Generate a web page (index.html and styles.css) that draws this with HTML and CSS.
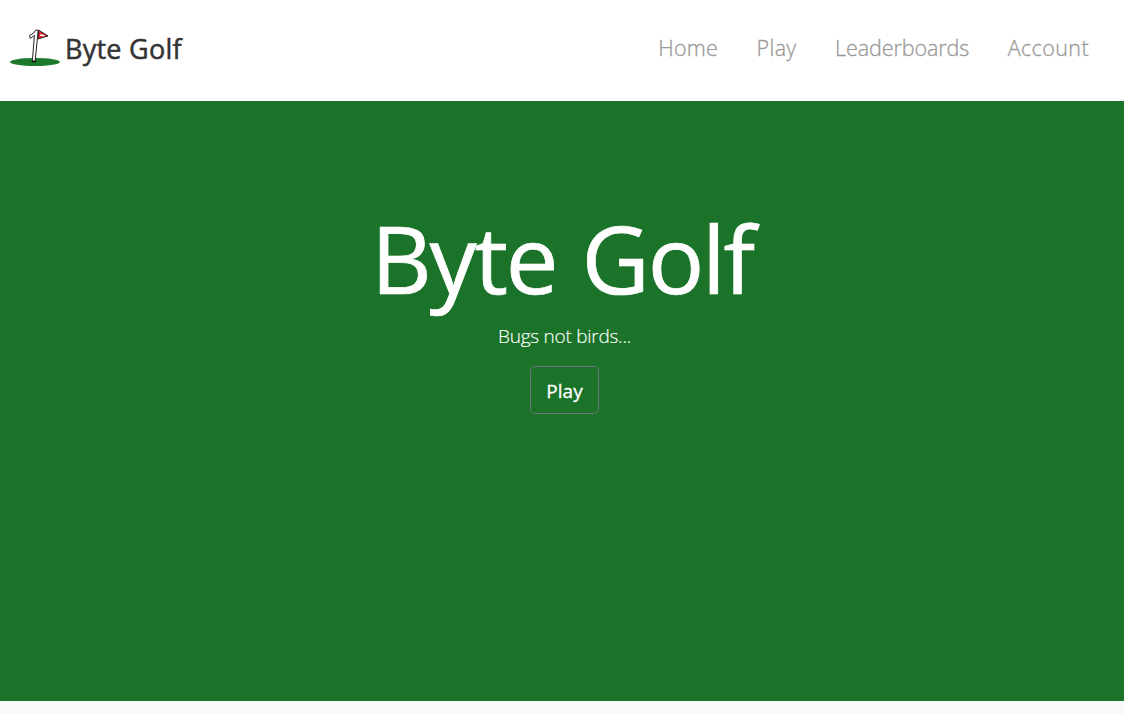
FILE: index.html
```html
<!DOCTYPE html>
<html lang="en">
<head>
<meta charset="utf-8">
<title>Byte Golf</title>
<link rel="stylesheet" href="styles.css">
</head>
<body>
<header class="navbar">
  <a class="brand" href="#">
    <svg class="logo" width="50" height="40" viewBox="0 0 50 40">
      <ellipse cx="25" cy="34" rx="25" ry="4" fill="#1d7a2c"/>
      <ellipse cx="24" cy="33.4" rx="2.6" ry="1.1" fill="#111"/>
      <path d="M28.8 2.2 38 8 27.8 11Z" fill="#e0202c" stroke="#222" stroke-width="1"/>
      <path d="M30 7 34.5 7.7" stroke="#fff" stroke-width="1.5"/>
      <path d="M28.2 2 25.2 33 22.4 33 24.4 7.4 20.2 10.4 19.5 7.4Q24 5.8 25.8 2.2Z" fill="#fff" stroke="#222" stroke-width="1" stroke-linejoin="round"/>
    </svg>
    <span class="brand-name">Byte Golf</span>
  </a>
  <nav class="links">
    <a class="home" href="#">Home</a>
    <a class="play" href="#">Play</a>
    <a class="boards" href="#">Leaderboards</a>
    <a class="account" href="#">Account</a>
  </nav>
</header>
<main class="hero">
  <h1>Byte Golf</h1>
  <p>Bugs not birds...</p>
  <a class="button" href="#">Play</a>
</main>
</body>
</html>
```
FILE: styles.css
```css
* { box-sizing: border-box; }
body {
  margin: 0;
  background: #f8f9fa;
  font-family: "Open Sans", "Noto Sans", sans-serif;
  height: 714px;
  overflow: hidden;
}
a { color: inherit; text-decoration: none; }
.navbar {
  display: flex;
  justify-content: space-between;
  height: 101px;
  padding: 0 35px 0 10px;
  background: #fff;
}
.brand { display: flex; color: #333; }
.logo { margin-top: 28px; }
.brand-name {
  margin: 29px 0 0 5px;
  font-size: 27px;
  line-height: 40px;
  font-weight: 400;
  letter-spacing: 0.25px;
  -webkit-text-stroke: 0.5px #333;
}
.links {
  display: flex;
  gap: 38.6px;
  padding-top: 33px;
  color: #999;
  font-size: 21.5px;
  line-height: 30px;
  font-weight: 300;
  -webkit-text-stroke: 0.3px #999;
}
.home { letter-spacing: 0.2px; }
.play { letter-spacing: 0.3px; }
.boards { letter-spacing: -0.1px; }
.account { letter-spacing: 0.4px; }
.hero {
  display: flex;
  flex-direction: column;
  align-items: center;
  height: 600px;
  padding: 100px 0 0 5px;
  background: #1a7328;
  color: #fff;
}
h1 {
  margin: 0 5px 0 0;
  font-size: 94px;
  line-height: 115px;
  font-weight: 400;
  letter-spacing: -2.2px;
  word-spacing: 3px;
  -webkit-text-stroke: 0.7px #fff;
}
p {
  margin: 5px 0 0;
  font-size: 19px;
  line-height: 30px;
  font-weight: 300;
  letter-spacing: -0.25px;
  -webkit-text-stroke: 0.15px #fff;
}
.button {
  width: 69px;
  height: 48px;
  margin-top: 15px;
  border: 1px solid #6c757d;
  border-radius: 5px;
  font-size: 19px;
  line-height: 48px;
  font-weight: 400;
  text-align: center;
  -webkit-text-stroke: 0.3px #fff;
}
```
